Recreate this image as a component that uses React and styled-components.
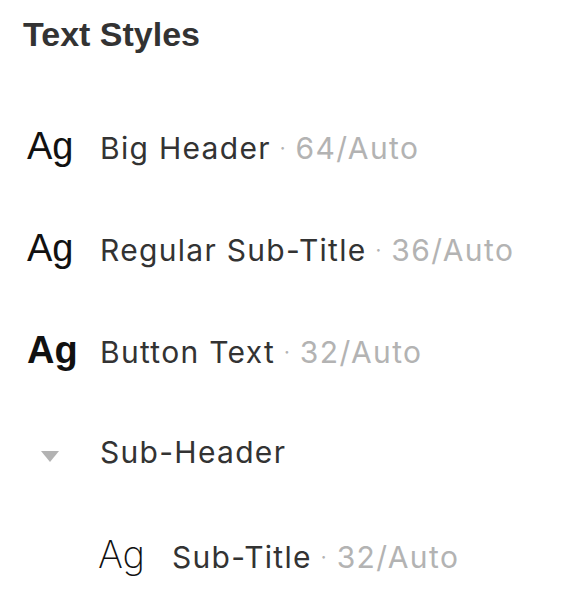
import React from "react";
import styled, { createGlobalStyle } from "styled-components";

const Global = createGlobalStyle`
  html, body { margin: 0; padding: 0; background: #fff; }
  body { font-family: Inter, "Liberation Sans", sans-serif; }
`;

const Panel = styled.div`
  padding: 6px 0 0 25px;
  width: 567px;
  box-sizing: border-box;
`;

const Title = styled.h2`
  margin: 0 0 0 -2px;
  font-family: "Liberation Sans", Arial, sans-serif;
  font-weight: 700;
  font-size: 34px;
  line-height: 56px;
  color: #333333;
  height: 56px;
`;

const List = styled.div`
  display: flex;
  flex-direction: column;
  padding-top: 62px;
`;

const Row = styled.div`
  display: flex;
  align-items: baseline;
  height: 102px;
  line-height: 44px;
  padding-left: ${(p) => p.$indent || 0}px;
`;

const Glyph = styled.span`
  width: ${(p) => p.$w || 75}px;
  flex: none;
  font-family: ${(p) => (p.$light ? 'Inter, "Liberation Sans", sans-serif' : '"Liberation Sans", Arial, sans-serif')};
  font-size: 38px;
  font-weight: ${(p) => p.$weight || 400};
  color: #111111;
  text-indent: ${(p) => (p.$light ? 0 : 2)}px;
`;

const Caret = styled.span`
  width: 75px;
  flex: none;
  display: inline-flex;
  padding-left: 16px;
  box-sizing: border-box;
  svg { display: block; }
`;

const Name = styled.span`
  font-family: Inter, "Liberation Sans", sans-serif;
  font-size: 30px;
  letter-spacing: 1.3px;
  color: #333333;
  white-space: nowrap;
`;

const Meta = styled.span`
  font-family: Inter, "Liberation Sans", sans-serif;
  font-size: 30px;
  letter-spacing: 1.4px;
  color: #b3b3b3;
  white-space: nowrap;
`;

const Dot = styled.span`
  margin: 0 10px 0 9px;
  font-size: 20px;
  letter-spacing: 0;
  position: relative;
  top: -4px;
`;

function StyleRow({ name, meta, weight, light, indent, glyphWidth }) {
  return (
    <Row $indent={indent}>
      <Glyph $weight={weight} $light={light} $w={glyphWidth}>Ag</Glyph>
      <Name>{name}</Name>
      <Meta>
        <Dot>·</Dot>
        {meta}
      </Meta>
    </Row>
  );
}

export default function App() {
  return (
    <>
      <Global />
      <Panel>
        <Title>Text Styles</Title>
        <List>
          <StyleRow name="Big Header" meta="64/Auto" />
          <StyleRow name="Regular Sub-Title" meta="36/Auto" />
          <StyleRow name="Button Text" meta="32/Auto" weight={700} />
          <Row>
            <Caret>
              <svg width="18" height="12" viewBox="0 0 18 12">
                <path d="M0 0 H18 L9 11 Z" fill="#b3b3b3" />
              </svg>
            </Caret>
            <Name>Sub-Header</Name>
          </Row>
          <StyleRow name="Sub-Title" meta="32/Auto" weight={200} light indent={73} glyphWidth={74} />
        </List>
      </Panel>
    </>
  );
}
